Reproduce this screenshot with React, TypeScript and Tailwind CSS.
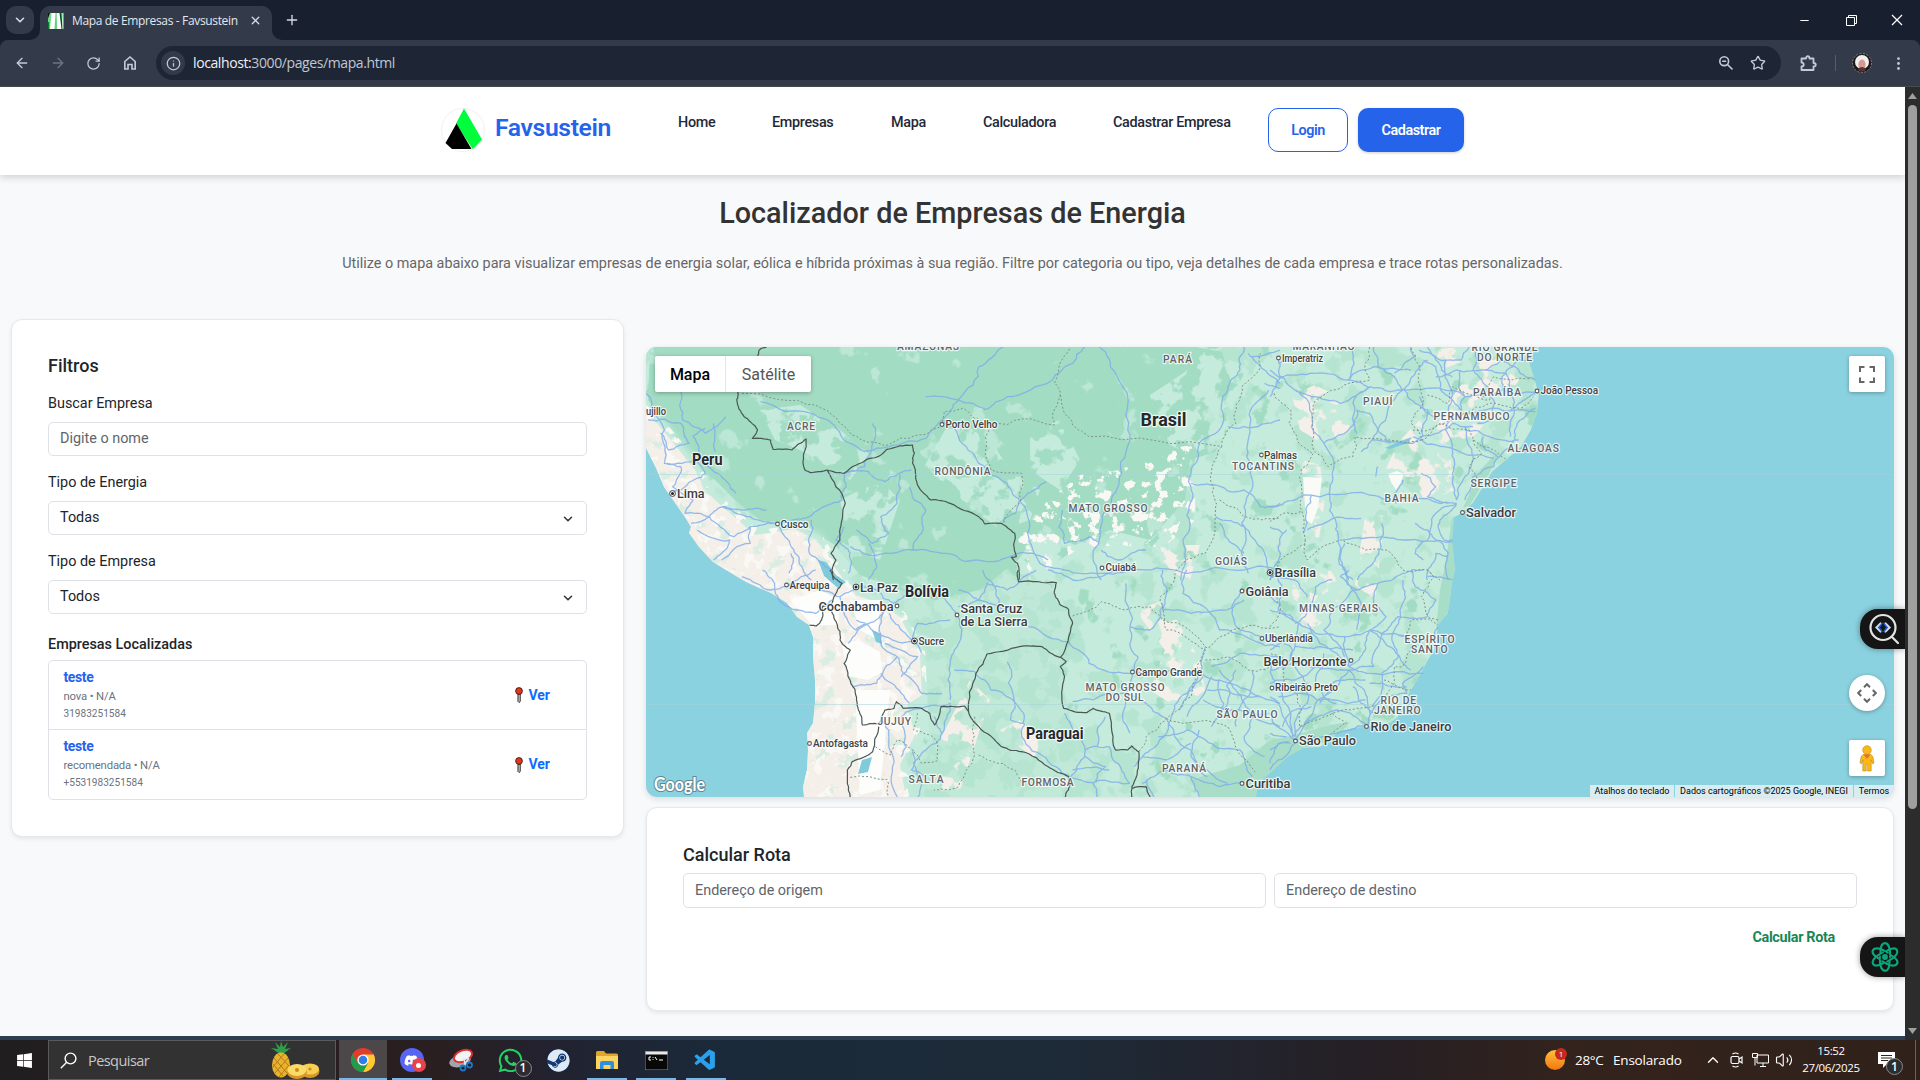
import React from "react";
import {
  ArrowLeft, ArrowRight, RotateCw, Info, Star, ChevronDown, ChevronUp, X, Plus,
  Minus, EllipsisVertical, Volume2,
} from "lucide-react";
import { FaWindows, FaDiscord, FaWhatsapp, FaSteam } from "react-icons/fa";
import { VscVscode } from "react-icons/vsc";

/* ---------- map data ---------- */

type Pt = [number, number];

function parse(s: string): Pt[] {
  return s.trim().split(/\s+/).map((p) => p.split(",").map(Number) as Pt);
}

/* Turns a coarse polyline into a slightly irregular one, always the same way for the same input. */
function wander(s: string, amp = 0.09): string {
  let pts = parse(s);
  let seed = Math.floor(pts[0][0] * 31 + pts[0][1] * 17 + pts.length * 7);
  const rnd = () => {
    seed = (seed * 1103515245 + 12345) % 2147483648;
    return seed / 2147483648 - 0.5;
  };
  for (let k = 0; k < 3; k++) {
    const out: Pt[] = [pts[0]];
    for (let i = 1; i < pts.length; i++) {
      const [ax, ay] = pts[i - 1];
      const [bx, by] = pts[i];
      const r = rnd() * 2 * amp;
      out.push([(ax + bx) / 2 - (by - ay) * r, (ay + by) / 2 + (bx - ax) * r], [bx, by]);
    }
    pts = out;
  }
  return "M" + pts.map((p) => p[0].toFixed(1) + " " + p[1].toFixed(1)).join("L");
}

const LAND =
  "M646 347V448L656 468 664 487 673 500 685 517 691 527 689 533 699 547 713 562 726 570 746 582 771 593 787 603 797 617 809 625 813 637 813 657 815 680 815 703 813 723 807 733 808 750 807 770 803 787 804 797H1256L1258 783 1270 773 1287 757 1303 748 1320 747 1332 740 1336 733 1353 728 1367 727 1390 723 1398 717 1405 700 1413 687 1421 673 1428 660 1436 647 1438 625 1448 613 1450 600 1452 583 1455 570 1452 540 1454 518 1463 512 1473 503 1483 487 1492 472 1506 460 1521 447 1531 430 1537 413 1539 395 1535 380 1530 365 1527 347Z";

const AMAZON =
  "M650 347H1196L1222 352 1232 385 1224 405 1228 430 1215 452 1190 460 1185 500 1150 540 1110 530 1075 545 1040 530 1018 560 980 590 935 600 900 590 860 575 835 545 800 525 760 520 735 500 715 480 690 465 668 432 648 400Z";

const AMAZON_LIGHT =
  "M945 430 965 425 990 440 1010 470 1040 490 1030 520 1000 530 975 510 950 490 925 465Z M1150 395 1185 372 1200 350 1225 347 1240 380 1225 440 1190 455 1160 440Z M760 410 800 405 840 430 870 455 850 480 800 450 775 440Z M840 500 880 480 900 500 880 560 850 550Z M1030 430 1060 420 1080 460 1060 490 1030 470Z";

const LOWLAND =
  "M890 575 960 560 1010 575 1050 585 1070 620 1062 680 1070 720 1110 760 1100 797H900L930 740 925 660 905 610Z";

const DRY =
  "M646 405 662 418 680 440 700 465 712 488 735 508 760 530 800 524 822 535 838 560 860 590 885 598 905 612 925 650 927 690 912 700 920 730 905 760 912 797H800L815 700 813 640 787 603 713 562 685 517 646 450Z";

const SALT =
  "M842 645 858 640 880 652 882 672 868 680 848 676Z M790 600 820 590 840 600 838 625 812 625Z M850 600 880 600 878 640 860 630Z M855 690 890 690 880 790 860 795Z";

const SERRADO =
  "M1048 500 1080 475 1120 470 1160 450 1192 445 1196 520 1160 550 1120 545 1080 548 1030 580 1018 540Z";

const NE_DRY =
  "M1385 470 1400 440 1425 415 1450 400 1480 360 1500 360 1520 380 1500 400 1480 430 1460 450 1455 490 1430 500 1400 490Z M1292 395 1315 385 1345 400 1350 430 1325 445 1300 430Z M1302 460 1320 465 1325 500 1318 545 1305 535Z M1430 350 1460 347 1480 355 1440 370Z M1365 515 1385 515 1375 600 1355 585Z";

const CENTER_DRY =
  "M1135 610 1165 600 1200 660 1205 690 1180 710 1150 690 1165 650Z M1160 545 1200 545 1190 580 1165 570Z M1020 720 1040 740 1035 760 1000 730Z M1290 580 1330 570 1350 600 1300 640Z M940 740 970 680 990 700 960 790 935 797Z";

const COAST_GREEN =
  "M1452 518 1458 515 1454 580 1448 612 1436 630 1440 590 1446 560Z M1256 797 1200 797 1190 780 1240 765 1270 740 1295 735 1330 725 1350 722 1335 740 1303 748 1270 773Z M1500 450 1490 472 1470 505 1463 508 1480 470Z";

const TRANSFORMS = [
  "translate(640 340) scale(.40816 .33333)",
  "translate(640 570) scale(.40816 .33333)",
  "translate(1270 340) scale(.41454 .33333)",
  "translate(1270 570) scale(.41454 .33333)",
];

const BORDERS: string[][] = [
  [
    "310,21 292,30 288,50 240,155 237,180 255,230 270,245 288,270 275,295 320,300 326,328 372,330 407,297 404,390 418,398 458,390 500,400 530,375 590,345 605,328 668,315 672,340 668,370 678,425 712,480 760,490 830,530 845,552 885,550 918,580 922,650 910,652 925,670 928,720",
    "458,390 503,490 492,560 490,600 468,640 480,660 470,690 474,720",
  ],
  [
    "465,0 478,25 495,40 478,75 470,100 447,110 445,150 432,168 415,165",
    "463,115 482,160 490,210 515,240 500,280 510,320 527,360 535,420 545,465 585,462 600,420 622,415 628,395 645,415 690,415 710,430 722,465 738,410 795,408 805,425 823,310 850,252 930,230 985,230 1030,262 1060,160 1050,118 1030,105 1015,70 1020,38 928,36 926,0",
    "1030,262 1044,275 1030,290 1040,320 1038,415 1095,428 1110,415 1150,430 1165,540 1195,540 1205,528 1222,545 1218,610 1205,650 1205,681",
    "585,470 570,545 520,575 508,600 515,681",
    "805,425 830,470 885,530 935,545 1000,590 1050,620 1052,650 1042,681",
    "1205,655 1240,650 1250,681",
  ],
  [],
  [],
];

const STATES: string[][] = [
  [
    "250,160 430,195 520,285 600,318 680,285 735,260 745,215 790,205 820,235 860,255 1015,255 1030,160 1015,130 1055,21",
    "1030,165 1060,255 1100,290 1425,320 1460,250 1475,140 1510,100 1520,40",
    "860,260 860,390 935,400 930,490 890,550",
    "1425,320 1405,440 1410,510 1385,640 1345,655 1310,720",
    "1420,480 1480,530 1568,535",
  ],
  [
    "1060,138 1130,95 1190,120 1250,110 1280,150 1390,235 1450,180 1568,170",
    "1310,20 1275,80 1290,180 1385,240 1360,330 1320,420 1290,445 1240,500 1222,545",
    "1290,445 1400,455 1440,470 1475,560 1510,610",
    "820,440 820,555 780,650 720,660",
    "830,555 890,580 940,640",
    "515,622 605,628 608,681",
    "680,430 670,480 725,510 730,570 690,580 630,510 615,555 575,525",
    "1385,270 1440,260 1490,300 1568,280",
  ],
  [
    "10,160 50,210 45,250 70,310 105,340 75,390 78,470 85,600",
    "240,21 240,120 190,130 110,180 105,330 140,380 200,350 205,290 290,300 365,300 340,250 370,190 350,60 340,21",
    "345,270 420,250 470,220 530,190 600,205 635,170",
    "365,300 410,250 480,270 490,300 550,340 570,360",
    "490,300 510,340 480,380 500,420",
    "380,165 430,190 440,140 530,180 540,110 630,115",
    "0,545 30,520 75,515",
    "85,600 90,660 150,610 170,600 230,630 280,630 320,690 380,690 410,720",
    "85,610 50,640 0,720",
  ],
  [
    "380,0 395,20 365,80 375,130 405,165",
    "405,150 340,150 330,190 340,240 320,290 300,290 300,340 275,400",
    "275,330 340,360",
    "270,400 150,430 70,470 65,370 30,350 35,270 0,250",
    "150,430 185,460 150,490",
    "0,170 25,120 20,60",
  ],
];

const ROADS: string[][] = [
  [
    "890,21 830,80 780,180 700,170",
    "780,180 845,208 900,170 1010,120 1060,70 1090,21",
    "780,180 740,240 700,295 610,320 550,335 480,265 420,220 295,185",
    "1125,21 1165,100 1195,270 1180,400 1155,490 1125,600 1110,650 1130,720",
    "740,245 780,290 830,370 900,430 935,490 950,580 980,670 1040,690 1130,700 1240,690 1340,700 1480,690 1568,690",
    "570,250 570,310 550,380 500,400 495,480 450,500 390,540",
    "500,400 560,395 600,425 635,400 665,390",
    "635,400 630,490 590,530 610,580 570,610 530,570",
    "660,440 700,510 690,580 670,630 560,645 515,620",
    "560,610 580,680 560,720",
    "670,630 750,640 850,665 950,640 1000,660",
    "995,425 950,460 920,520 890,545",
    "1035,510 1040,610 1100,590 1125,608",
    "1480,21 1470,90 1440,150 1430,240 1370,310 1350,400 1345,500 1330,600 1325,720",
    "1490,40 1530,90 1568,130",
    "1500,50 1568,30",
    "1540,150 1500,200 1490,300 1495,400 1480,500 1485,600 1490,700",
    "1350,430 1400,435 1480,450 1520,500 1568,490",
    "1440,260 1480,260 1568,240",
    "1530,130 1568,145",
    "1410,530 1480,560 1520,620 1540,690",
    "1420,550 1450,610 1480,640",
    "100,150 105,240 160,280 210,230",
    "160,265 130,290 150,350 190,400 235,460",
    "180,250 185,335",
    "20,240 100,250 120,310 70,330 50,280",
    "15,160 60,270 60,370 100,380 80,440 130,480 110,520 170,530 210,500 270,530 340,550 390,535",
    "65,370 140,365 160,400 110,440 80,455",
    "125,550 170,530 230,590 270,560 330,550",
    "140,570 220,600 200,640 180,660",
    "270,560 270,610 200,660",
    "340,560 370,620 400,690 420,720",
    "420,540 415,640 470,690",
    "200,500 250,510 310,510",
    "370,640 365,700",
    "1130,630 1170,660 1240,630",
    "500,560 480,600 515,640 510,700",
  ],
  [
    "250,20 320,60 380,50 440,60 490,80 530,50 580,60 620,100 680,70 740,80 780,140 770,240 760,310 760,390",
    "300,0 330,40 350,100 380,120 430,130 470,90",
    "360,50 395,20 430,0",
    "490,80 500,130 530,180 560,160 600,120 590,220 630,260 590,320 580,340 520,350",
    "510,220 560,160",
    "530,150 600,200 670,215 690,250",
    "590,310 640,370 660,400",
    "630,260 640,300 690,370 740,370",
    "600,220 680,260 640,320",
    "680,215 640,180 610,130",
    "670,210 680,160 760,150",
    "780,110 830,90 850,40 900,60 940,20 970,0",
    "780,60 830,90 900,120",
    "840,0 870,50 880,100",
    "770,300 820,305 860,360 940,430 935,500 1000,575 1080,630 1200,640",
    "900,275 910,300 908,450 940,460",
    "950,170 1050,215 1100,280 1200,310 1300,300 1370,310 1420,330 1500,370 1568,400",
    "1000,0 1060,30 1130,20 1190,0",
    "1190,40 1200,180 1220,260 1205,310 1190,390 1200,490",
    "1200,170 1250,180 1280,100",
    "1060,395 1110,390 1180,370 1240,400 1280,440",
    "1280,0 1290,70 1280,120 1350,130 1420,120 1480,90",
    "1340,0 1330,70 1420,180 1500,210 1568,230",
    "1480,60 1450,110 1470,180 1520,200",
    "1385,230 1370,310 1340,370 1300,450 1250,540 1210,590",
    "1380,320 1320,420",
    "1400,320 1340,440",
    "1420,300 1460,360 1500,440 1568,470",
    "1390,360 1450,370 1520,380",
    "1380,390 1470,420 1540,430",
    "1460,300 1440,400 1400,470",
    "1500,300 1490,380 1460,470",
    "1270,500 1340,480 1410,530 1470,540 1500,620",
    "1230,640 1290,600 1350,620 1420,650 1480,640",
    "1280,440 1310,500 1370,590 1440,640",
    "1370,480 1350,560 1390,620",
    "1230,560 1290,570 1350,520",
    "1040,430 1060,480 1090,550 1070,600 1050,640",
    "1090,540 1150,530 1180,600 1200,640",
    "1090,560 1140,590 1110,640 1120,681",
    "1060,600 1150,600",
    "1140,440 1120,480 1120,530",
    "590,440 610,480 620,560 630,681",
    "640,440 650,500 640,560",
    "720,440 740,490 700,540 670,580 690,640 680,681",
    "640,440 700,410 760,400 740,490",
    "670,540 665,600 700,620",
    "1568,100 1530,60 1480,60",
    "1240,630 1260,681",
    "1350,620 1370,681",
    "1420,330 1430,400 1410,450",
    "1400,290 1470,250 1568,260",
    "1500,440 1480,500 1530,560",
  ],
  [
    "20,60 25,110 0,170",
    "80,50 20,70",
    "0,90 60,150 100,170 170,190 240,140 320,150 410,145 470,170 560,150 640,158",
    "20,110 110,100 190,120 250,80 340,90",
    "60,150 90,180 100,260 130,310 150,400 145,470 160,550 170,620 190,720",
    "130,310 180,280 210,210 240,220 260,270 290,310",
    "200,21 190,120 240,145",
    "250,21 260,80 300,110 320,150",
    "320,150 260,270 220,335",
    "320,150 350,100 380,60",
    "325,150 350,190 380,210 400,240",
    "345,290 420,320 540,355",
    "245,300 345,310 365,290 440,250 490,260",
    "360,30 410,60 460,60 480,21",
    "400,110 450,90 520,90 560,60 630,60",
    "410,145 400,80 370,60",
    "425,60 440,160 430,210 440,330 440,400 450,480",
    "460,90 470,170 460,220 520,210 640,215",
    "490,21 490,90 530,150 540,230 500,250",
    "520,90 570,100 580,150 590,210 580,290",
    "600,40 560,110 560,150",
    "640,160 600,190 580,210",
    "640,205 590,270 590,300",
    "470,270 530,290 560,300 600,300",
    "470,260 490,350 470,410 450,480",
    "515,290 520,330 550,350",
    "590,300 540,380 490,410 470,480",
    "365,400 400,440 380,470 430,490",
    "80,465 240,465 280,480 410,490 450,490",
    "0,500 60,480 80,465",
    "100,465 90,550 80,580",
    "220,535 130,550 90,570",
    "450,490 400,520 380,600 350,640 370,660",
    "450,490 410,540 420,600 440,600",
    "175,600 270,590 320,600 440,605",
    "350,550 380,570 400,600",
    "270,550 265,600 240,680 210,720",
    "400,600 430,640 430,720",
    "430,650 400,640 380,690 380,720",
    "260,380 255,410",
    "320,420 300,460 305,490",
    "40,570 20,620 10,700 0,720",
    "0,560 30,580",
    "180,610 175,680 200,720",
    "360,170 380,220 370,290",
    "410,145 440,180 460,210",
    "300,100 350,50 340,21",
    "240,140 200,190 210,280",
    "560,60 600,90 640,120",
    "380,21 400,60 440,110",
  ],
  [
    "0,20 60,30 90,80",
    "10,10 30,60 20,120 70,160 110,190 190,200 300,190 330,200",
    "180,10 200,60 150,120 130,180 180,260",
    "210,60 170,20 190,0",
    "200,60 260,40 320,10 370,0",
    "260,40 250,100 280,140 240,180 230,240 190,290",
    "320,30 320,100 300,180 310,260 270,310 245,410",
    "380,20 440,30",
    "340,0 350,50 400,90 380,140",
    "380,140 310,140 270,190 250,290 180,300",
    "405,170 390,220 400,250",
    "190,290 120,220 90,160",
    "190,290 240,310 370,310",
    "370,290 320,340 330,370 280,380 240,440",
    "190,300 160,350 110,400 60,510",
    "190,300 230,370 240,420 235,470",
    "180,300 110,290 60,330 0,340",
    "130,250 110,330 130,380 160,400",
    "0,200 50,230 80,320 90,400 60,500",
    "60,510 0,430",
    "60,500 20,400 0,380",
    "55,500 10,330 0,280",
    "60,500 100,450 160,420 235,470",
    "60,515 150,490 235,465",
    "0,240 60,200 100,190",
    "60,230 120,230 200,240",
    "180,200 190,290",
    "20,380 80,370 150,390 230,390",
    "40,500 0,490",
    "45,515 0,540",
    "60,520 20,570 0,600",
    "50,520 20,520 0,580",
    "240,340 300,350 330,350",
    "250,430 220,400 200,350",
    "0,120 40,140 70,160",
    "100,410 60,420 30,470",
    "210,180 220,100 200,60",
    "300,190 340,210 380,210 390,230",
    "60,160 100,110 110,50 150,30",
    "70,160 60,230 30,300",
    "240,180 300,240 340,300",
    "120,400 150,340 230,330",
    "0,300 60,280 110,290",
  ],
];

/* label: text, left, baseline, width, kind (c city, b large city, s state, n country) */
type Label = [string, number, number, number, "c" | "b" | "s" | "n"];
const LABELS: Label[] = [
  ["AMAZONAS", 897, 350, 62, "s"], ["PARÁ", 1163, 363, 29, "s"], ["ujillo", 646, 414.5, 20, "c"], ["ACRE", 787, 430, 28, "s"],
  ["Porto Velho", 945.5, 428, 52, "c"], ["Brasil", 1140.5, 425.5, 46, "n"], ["Peru", 692, 465, 30.5, "n"], ["RONDÔNIA", 934.5, 474.5, 56, "s"],
  ["MATO GROSSO", 1068.5, 512, 79, "s"], ["Lima", 677, 497.5, 27.5, "b"], ["Cusco", 780.5, 528, 28, "c"], ["Cuiabá", 1105.5, 571, 30.5, "c"],
  ["GOIÁS", 1215, 564.5, 32, "s"], ["Palmas", 1264, 458.5, 33, "c"], ["TOCANTINS", 1232, 470, 62, "s"], ["Arequipa", 789.5, 588.5, 40, "c"],
  ["La Paz", 860, 591.5, 38, "b"], ["Bolívia", 905, 597, 44, "n"], ["Cochabamba", 818.5, 610.5, 75, "b"], ["Santa Cruz", 960.5, 613, 62, "b"],
  ["de La Sierra", 960.5, 626, 67, "b"], ["Sucre", 918.5, 645, 25.5, "c"], ["JUJUY", 877.5, 724.5, 33.5, "s"], ["Antofagasta", 813, 746.5, 55, "c"],
  ["SALTA", 908.5, 782.5, 35, "s"], ["FORMOSA", 1021.5, 786, 52, "s"], ["Paraguai", 1026, 738.5, 57.5, "n"], ["Campo Grande", 1135.5, 676, 66.5, "c"],
  ["MATO GROSSO", 1085.5, 691, 79, "s"], ["DO SUL", 1105.5, 701, 38, "s"], ["SÃO PAULO", 1216.5, 718, 61, "s"], ["PARANÁ", 1162, 771.5, 44, "s"],
  ["Curitiba", 1245.5, 788, 45, "b"], ["Goiânia", 1245.5, 595.5, 43, "b"], ["Brasília", 1274.5, 576.5, 41.5, "b"], ["Uberlândia", 1265, 642, 48, "c"],
  ["Belo Horizonte", 1263.5, 665.5, 83, "b"], ["Ribeirão Preto", 1275, 691, 63, "c"], ["MINAS GERAIS", 1299, 612, 79, "s"], ["ESPÍRITO", 1404.5, 642.5, 50, "s"],
  ["SANTO", 1411, 653, 36.5, "s"], ["RIO DE", 1380.5, 704, 35.5, "s"], ["JANEIRO", 1374, 714, 46.5, "s"], ["Rio de Janeiro", 1370.5, 731, 81, "b"],
  ["São Paulo", 1299, 745, 57, "b"], ["MARANHÃO", 1292.5, 350, 62, "s"], ["Imperatriz", 1282, 361.5, 41, "c"], ["RIO GRANDE", 1471.5, 350.5, 66, "s"],
  ["DO NORTE", 1477, 360.5, 55, "s"], ["PARAÍBA", 1473, 395.5, 48, "s"], ["João Pessoa", 1540.5, 394, 57.5, "c"], ["PIAUÍ", 1363, 404.5, 29.5, "s"],
  ["PERNAMBUCO", 1433.5, 419.5, 76, "s"], ["ALAGOAS", 1507.5, 451.5, 51.5, "s"], ["SERGIPE", 1470.5, 487, 46, "s"], ["BAHIA", 1384.5, 501.5, 34, "s"],
  ["Salvador", 1466, 517, 50, "b"],
];

const DOTS: Pt[] = [
  [942, 424.5], [777.5, 524], [1102, 568], [1261.5, 455], [786.5, 585], [897, 606], [957, 615], [809.5, 743.5], [1132.5, 672], [1242, 783.5],
  [1242, 591], [1262, 638.5], [1351, 660.5], [1272, 688], [1366.5, 726.5], [1295.5, 741], [1278.5, 358], [1537, 391], [1462.5, 512.5],
];
const CAPITALS: Pt[] = [[672.5, 493.5], [856, 587], [914.5, 641], [1270, 572.5]];

const labelStyle: Record<string, [number, number, string]> = {
  c: [10.8, 500, "#3f4144"],
  b: [13.4, 500, "#3a3c40"],
  s: [10.3, 500, "#5f6368"],
  n: [15.6, 700, "#26282c"],
};

function Lines({ set, amp, ...svg }: { set: string[][]; amp: number } & React.SVGProps<SVGPathElement>) {
  return (
    <>
      {set.map((list, i) => (
        <g key={i} transform={TRANSFORMS[i]} fill="none">
          <path d={list.map((s) => wander(s, amp)).join("")} vectorEffect="non-scaling-stroke" strokeLinejoin="round" {...svg} />
        </g>
      ))}
    </>
  );
}

/* Breaks a flat region into irregular patches of a single colour. */
function Patches({ id, freq, seed, cut, color }: { id: string; freq: string; seed: number; cut: number; color: string }) {
  return (
    <filter id={id} x="0" y="0" width="1" height="1" colorInterpolationFilters="sRGB">
      <feTurbulence type="fractalNoise" baseFrequency={freq} numOctaves={4} seed={seed} />
      <feColorMatrix type="matrix" values={`0 0 0 0 0  0 0 0 0 0  0 0 0 0 0  14 0 0 0 ${-14 * cut}`} result="m" />
      <feFlood floodColor={color} />
      <feComposite in2="m" operator="in" />
      <feComposite in2="SourceAlpha" operator="in" />
    </filter>
  );
}

function MapCanvas() {
  return (
    <svg viewBox="646 347 1248 450" width="1248" height="450" className="block">
      <defs>
        <clipPath id="land"><path d={LAND} /></clipPath>
        <Patches id="f-mid" freq="0.035" seed={4} cut={0.56} color="#b5e4d0" />
        <Patches id="f-dark" freq="0.04" seed={9} cut={0.66} color="#a2dcc3" />
        <Patches id="f-pale" freq="0.035" seed={3} cut={0.67} color="#bce7d6" />
        <Patches id="f-tan" freq="0.05" seed={7} cut={0.52} color="#f4efe8" />
        <Patches id="f-white" freq="0.09" seed={12} cut={0.57} color="#faf8f5" />
        <Patches id="f-lite" freq="0.05" seed={21} cut={0.45} color="#c5ebdc" />
        <Patches id="f-green" freq="0.06" seed={5} cut={0.62} color="#c5ebdc" />
        <filter id="soft"><feGaussianBlur stdDeviation="3" /></filter>
      </defs>
      <rect x="646" y="347" width="1248" height="450" fill="#8bd2e0" />
      <g clipPath="url(#land)">
        <path d={LAND} fill="#c5ebdc" />
        <path d={LAND} filter="url(#f-mid)" />
        <path d={LAND} filter="url(#f-dark)" />
        <path d={LOWLAND} fill="#b5e4d0" />
        <path d={LOWLAND} filter="url(#f-lite)" opacity=".7" />
        <path d={AMAZON} fill="#a2dcc3" />
        <path d={AMAZON} filter="url(#f-pale)" />
        <path d={AMAZON_LIGHT} filter="url(#f-lite)" />
        <path d={COAST_GREEN} fill="#a8dec7" />
        <path d={DRY} fill="#c5ebdc" filter="url(#soft)" />
        <path d={DRY} fill="#f4efe8" transform="translate(-5 5)" />
        <path d={DRY} filter="url(#f-green)" opacity=".55" />
        <path d={DRY} filter="url(#f-white)" />
        <path d={SALT} fill="#fdfdfc" />
        <path d={SERRADO} filter="url(#f-white)" />
        <path d={NE_DRY} filter="url(#f-tan)" />
        <path d={CENTER_DRY} filter="url(#f-tan)" />
        <path d="M1388 474 1397 471 1404 474 1400 484 1396 490 1391 482Z M1303 477 1322 478 1318 508 1312 524 1306 520Z" fill="#fafaf7" />
        <path d="M1385 448 1398 442 1412 437 1408 443 1390 449Z M818 560 826 562 836 575 846 582 838 588 824 576Z M872 630 880 634 882 644 876 642Z M862 760 872 757 868 772 858 774Z" fill="#7fcbdc" />
      </g>
      <Lines set={ROADS} amp={0.13} stroke="#7facea" strokeWidth={1.3} opacity={0.8} />
      <Lines set={STATES} amp={0.12} stroke="#7f9389" strokeWidth={1} strokeDasharray="2 2" />
      <Lines set={BORDERS} amp={0.08} stroke="#4b5754" strokeWidth={1.2} />
      <path d="M646 474.5H1894M646 704.5H1894" stroke="#a5d3da" strokeWidth="1" opacity=".5" />
      {DOTS.map(([x, y]) => (
        <circle key={x + "-" + y} cx={x} cy={y} r="1.9" fill="#fff" stroke="#55585c" strokeWidth="1.1" />
      ))}
      {CAPITALS.map(([x, y]) => (
        <g key={x}>
          <circle cx={x} cy={y} r="2.9" fill="#fff" stroke="#3c4043" strokeWidth="1" />
          <circle cx={x} cy={y} r="1.5" fill="#202124" />
        </g>
      ))}
      {LABELS.map(([t, x, y, w, k]) => (
        <text
          key={t + x} x={x} y={y} textLength={w} lengthAdjust={k === "s" ? "spacing" : "spacingAndGlyphs"}
          fontSize={t === "Brasil" ? 18 : labelStyle[k][0]} fontWeight={labelStyle[k][1]} fill={labelStyle[k][2]}
          stroke="#ffffff" strokeOpacity=".75" strokeWidth="2.4" strokeLinejoin="round" paintOrder="stroke"
        >
          {t}
        </text>
      ))}
      <text x="654" y="790.5" textLength="51" lengthAdjust="spacingAndGlyphs" fontSize="18" fontWeight="700" fill="#fff" stroke="#5f8a96" strokeWidth="2.2" paintOrder="stroke" fontFamily="Lato, sans-serif">Google</text>
    </svg>
  );
}

function MapPanel() {
  return (
    <div className="relative h-[450px] w-[1248px] overflow-hidden rounded-[11px] shadow-[0_2px_6px_rgba(0,0,0,0.12)]">
      <MapCanvas />
      <div className="absolute left-[9px] top-[9px] flex h-9 rounded-[2px] bg-white pt-0.5 text-[16px] shadow-[0_1px_4px_rgba(0,0,0,0.3)]">
        <div className="-mt-0.5 flex w-[71px] items-center justify-center border-r border-[#e6e6e6] pt-0.5 font-medium text-black">Mapa</div>
        <div className="flex w-[85px] items-center justify-center text-[#565656]">Satélite</div>
      </div>
      <div className="absolute left-[1203px] top-[9px] flex size-9 items-center justify-center rounded-[2px] bg-white shadow-[0_1px_4px_rgba(0,0,0,0.3)]">
        <svg width="16" height="17" viewBox="0 0 16 17" fill="none" stroke="#666" strokeWidth="2"><path d="M1 6V1h4.500M10.500 1H15v5M15 11.500V16h-4.500M5.500 16H1v-4.500" /></svg>
      </div>
      <div className="absolute left-[1203px] top-[328px] flex size-9 items-center justify-center rounded-full bg-white shadow-[0_1px_4px_rgba(0,0,0,0.3)]">
        <svg width="20" height="20" viewBox="0 0 20 20" fill="none" stroke="#666" strokeWidth="2"><path d="M7 4.200 10 1.200l3 3M7 15.800l3 3 3-3M4.200 7l-3 3 3 3M15.800 7l3 3-3 3" /></svg>
      </div>
      <div className="absolute left-[1203px] top-[393px] flex size-9 items-center justify-center rounded-[2px] bg-white shadow-[0_1px_4px_rgba(0,0,0,0.3)]">
        <svg width="16" height="27" viewBox="0 0 16 27" stroke="#b98a2e" strokeWidth=".6">
          <path d="M4 9.500h8l2 2.500 1 6-1.500.8-1.300-4V26H8.700v-7H7.300v7H3.800V14.800l-1.300 4L1 18l1-6z" fill="#fbb916" />
          <circle cx="8" cy="5" r="4.300" fill="#fbb916" />
          <path d="M4.500 9.500h7L8 14z" fill="#e8702a" stroke="none" />
        </svg>
      </div>
      <div className="absolute bottom-0 right-0 flex h-3 gap-px text-[9px] leading-[12px] text-black">
        <span className="w-[84px] bg-[#d9edf1] text-center">Atalhos do teclado</span>
        <span className="w-[178px] bg-[#d9edf1] text-center">Dados cartográficos ©2025 Google, INEGI</span>
        <span className="w-[40px] bg-[#d9edf1] text-center">Termos</span>
      </div>
    </div>
  );
}

/* ---------- browser chrome ---------- */

function TabStrip() {
  return (
    <div className="flex h-10 bg-[#182030] pl-1.5 text-[#d5dae4]">
      <div className="mt-1.5 flex size-7 items-center justify-center rounded-[10px] bg-[#333b4b]"><ChevronDown size={14} strokeWidth={2.800} /></div>
      <div className="relative ml-1.5 mt-1.5 flex h-[34px] w-[232px] items-center rounded-t-[10px] bg-[#333b4b] pb-[5px] pl-2">
        <svg className="absolute -left-[10px] bottom-0" width="10" height="10"><path d="M10 0v10H0A10 10 0 0 0 10 0" fill="#333b4b" /></svg>
        <svg className="absolute -right-[10px] bottom-0" width="10" height="10"><path d="M0 0v10h10A10 10 0 0 1 0 0" fill="#333b4b" /></svg>
        <svg width="16" height="16" viewBox="0 0 16 16">
          <rect width="16" height="16" fill="#fff" />
          <path d="M2 0H3.500L2 16H0V6z" fill="#5fdf80" /><path d="M0 0H2L0 6z" fill="#111" /><path d="M0 9h1.200v7H0z" fill="#0a7a2a" />
          <path d="M7.500 0h1.200L9 16H6.500z" fill="#5fd07c" /><path d="M11.500 0h2l1 16h-1z" fill="#0b4a20" /><path d="M14.500 0H16v16h-1z" fill="#05e63c" />
        </svg>
        <span className="ml-[8px] w-[166px] whitespace-nowrap font-['Open_Sans','Noto_Sans',sans-serif] text-[12px] tracking-[-0.35px] text-[#e3e7ee]">Mapa de Empresas - Favsustein</span>
        <X className="ml-[11px]" size={13} strokeWidth={2.400} />
      </div>
      <Plus className="ml-[12px] mt-3" size={16} strokeWidth={2} />
      <div className="ml-auto flex h-10 items-center text-white">
        <Minus className="mr-[35px]" size={13} strokeWidth={1.800} />
        <svg className="mr-[34px]" width="11" height="11" viewBox="0 0 11 11" fill="none" stroke="currentColor"><path d="M.5 2.500h8v8h-8zM2.500 2.500v-2h8v8h-2" /></svg>
        <svg className="mr-[17px]" width="12" height="12" viewBox="0 0 12 12" fill="none" stroke="currentColor" strokeWidth="1.200"><path d="m1 1 10 10M11 1 1 11" /></svg>
      </div>
    </div>
  );
}

function Toolbar() {
  return (
    <div className="flex h-[47px] items-center rounded-tl-[8px] rounded-tr-[8px] border-b border-[#474a50] bg-[#333b4b] pl-[14px] text-[#c3cbdb]">
      <ArrowLeft size={16} />
      <ArrowRight className="ml-5 text-[#6d7482]" size={16} />
      <RotateCw className="ml-[20px]" size={15} />
      <svg className="ml-[21px]" width="16" height="16" viewBox="0 0 16 16" fill="none" stroke="currentColor" strokeWidth="1.600"><path d="M2.800 6.500 8 2l5.200 4.500V14H10V9.500H6V14H2.800z" /></svg>
      <div className="ml-[18px] flex h-[34px] w-[1625px] items-center rounded-full bg-[#1e2636] pl-[5px]">
        <div className="flex size-6 items-center justify-center rounded-full bg-[#333b4b]"><Info size={15} /></div>
        <span className="ml-2 whitespace-nowrap pb-px font-['Open_Sans','Noto_Sans',sans-serif] text-[14px] tracking-[-0.4px] text-[#c0c6d2]"><span className="text-[#eef0f5]">localhost:</span>3000/pages/mapa.html</span>
        <svg className="ml-auto" width="16" height="16" viewBox="0 0 16 16" fill="none" stroke="currentColor" strokeWidth="1.600"><circle cx="6.200" cy="6.200" r="4.400" /><path d="m9.500 9.500 5 5M4.200 6.200h4" /></svg>
        <Star className="ml-[16px] mr-[15px]" size={16} />
      </div>
      <svg className="ml-[18px]" width="18" height="18" viewBox="0 0 18 18" fill="none" stroke="currentColor" strokeWidth="1.800" strokeLinejoin="round"><path d="M2.500 4.500H7c0-3 3.500-3 3.500 0h4V9c3 0 3 3.500 0 3.500V16h-12v-3.500c3 0 3-4 0-4z" /></svg>
      <div className="ml-[18px] h-4 w-px bg-[#555e70]" />
      <svg className="ml-[16px]" width="20" height="20" viewBox="0 0 20 20">
        <circle cx="10" cy="10" r="9.500" fill="#1b1b1d" stroke="#8d8378" strokeDasharray="2 1.500" />
        <ellipse cx="10" cy="9" rx="7" ry="7" fill="#f3eef0" /><ellipse cx="10" cy="11.500" rx="3.600" ry="5" fill="#d39b92" /><path d="M6 15.500q4-3 8 0l-1 2.500q-3 1-6 0z" fill="#5a3434" />
      </svg>
      <EllipsisVertical className="ml-[18px]" size={17} />
    </div>
  );
}

/* ---------- page ---------- */

function SiteHeader() {
  return (
    <header className="relative flex h-[88px] bg-white pl-[441px] pt-[21px] shadow-[0_2px_8px_rgba(0,0,0,0.18)]">
      <svg width="44" height="44" viewBox="0 0 44 44">
        <circle cx="22" cy="22" r="21.500" fill="#fff" stroke="#f1f1f1" />
        <path d="M23 .5 15 15.500 31.500 41 35 38 41 31.500z" fill="#02fd3d" />
        <path d="M15.500 15.500 30.500 41H11L4.500 35z" fill="#000" />
      </svg>
      <span className="ml-[10px] mt-[4px] w-[117px] text-[24.700px] font-semibold leading-[32px] tracking-[-0.350px] text-[#2563eb]">Favsustein</span>
      <nav className="ml-[66px] mt-[6px] flex gap-[57px] whitespace-nowrap text-[14.400px] font-medium leading-[18px] tracking-[-0.320px] text-[#1f2937]">
        <span className="w-[37px]">Home</span><span className="w-[62px]">Empresas</span><span className="w-[35px]">Mapa</span><span className="w-[73px]">Calculadora</span><span className="w-[118px]">Cadastrar Empresa</span>
      </nav>
      <div className="ml-[37px] flex gap-[10px] text-[14.400px] font-semibold tracking-[-0.450px]">
        <button className="h-11 w-20 rounded-[10px] border border-[#2563eb] pt-0.5 text-[#2563eb]">Login</button>
        <button className="h-11 w-[106px] rounded-[10px] bg-[#2563eb] pt-0.5 text-white shadow-[0_1px_3px_rgba(0,0,0,0.2)]">Cadastrar</button>
      </div>
    </header>
  );
}

function Field({ label, children, select }: { label: string; children: React.ReactNode; select?: boolean }) {
  return (
    <div className="mb-[14px]">
      <div className="mb-[7px] h-[23px] pt-px leading-[22px]">{label}</div>
      <div className={select ? "mb-[15px] flex h-[34px] items-center justify-between rounded-[5px] border border-[#dee2e6] bg-white pl-[11px] pr-[11px]" : "mb-[15px] flex h-[34px] items-center rounded-[5px] border border-[#dee2e6] bg-white pb-px pl-[11px] text-[#60656b]"}>
        {children}
        {select && <ChevronDown className="mt-0.5" size={14} strokeWidth={2.800} color="#343a40" />}
      </div>
    </div>
  );
}

function Company({ kind, phone }: { kind: string; phone: string }) {
  return (
    <div className="flex h-[69px] pl-[14.500px] pr-[36px]">
      <div className="pt-[6px] text-[#6b7280]">
        <div className="text-[14px] font-bold leading-[21px] tracking-[-0.400px] text-[#2563eb]">teste</div>
        <div className="text-[11.300px] leading-[18px] tracking-[-0.150px]">{kind} • N/A</div>
        <div className="text-[10.080px] leading-[15px]">{phone}</div>
      </div>
      <div className="ml-auto flex items-center gap-[5px] text-[14px] font-bold text-[#0d6efd]">
        <svg width="8" height="16" viewBox="0 0 8 16"><path d="M3 7h2.200v7.500L4 15.500 3 14.500z" fill="#ddd" stroke="#222" /><circle cx="4" cy="4" r="3.400" fill="#e3351b" stroke="#2a1512" strokeWidth=".8" /></svg>
        Ver
      </div>
    </div>
  );
}

function Sidebar() {
  return (
    <section className="h-[518px] w-[613px] rounded-[11px] border border-[#e6e8eb] bg-white px-9 pt-[35px] text-[14.400px] text-[#212529] shadow-[0_2px_4px_rgba(0,0,0,0.08)]">
      <h5 className="mb-[15px] h-[22px] text-[18px] font-medium leading-[22px]">Filtros</h5>
      <Field label="Buscar Empresa">Digite o nome</Field>
      <Field label="Tipo de Energia" select>Todas</Field>
      <Field label="Tipo de Empresa" select>Todos</Field>
      <h6 className="mb-[6px] mt-[22px] h-[18px] font-medium leading-[18px]">Empresas Localizadas</h6>
      <div className="h-[140px] divide-y divide-[#dee2e6] rounded-[5px] border border-[#dee2e6]">
        <Company kind="nova" phone="31983251584" />
        <Company kind="recomendada" phone="+5531983251584" />
      </div>
    </section>
  );
}

function RouteCard() {
  return (
    <section className="mt-[10px] h-[204px] rounded-[11px] border border-[#e6e8eb] bg-white px-9 pt-[36px] text-[14.400px] text-[#60656b] shadow-[0_2px_4px_rgba(0,0,0,0.08)]">
      <h5 className="mb-[7px] h-[22px] text-[18px] font-medium leading-[22px] text-[#212529]">Calcular Rota</h5>
      <div className="flex gap-2">
        <div className="flex h-[35px] flex-1 items-center rounded-[5px] border border-[#dee2e6] pl-[11px]">Endereço de origem</div>
        <div className="flex h-[35px] flex-1 items-center rounded-[5px] border border-[#dee2e6] pl-[11px]">Endereço de destino</div>
      </div>
      <div className="mt-[20px] pr-[22px] text-right text-[14.400px] font-bold leading-[20px] tracking-[-0.320px] text-[#198754]">Calcular Rota</div>
    </section>
  );
}

function Page() {
  return (
    <div className="relative h-[953px] w-[1905px] overflow-hidden bg-[#f8f9fb]">
      <SiteHeader />
      <h1 className="mt-[21px] text-center text-[28.800px] font-medium leading-[35px] text-[#333]">Localizador de Empresas de Energia</h1>
      <p className="mt-[22px] text-center text-[14.400px] leading-[22px] text-[#666]">
        Utilize o mapa abaixo para visualizar empresas de energia solar, eólica e híbrida próximas à sua região. Filtre por categoria ou tipo, veja detalhes de cada empresa e trace rotas personalizadas.
      </p>
      <main className="mt-[44px] flex gap-[22px] pl-[11px]">
        <Sidebar />
        <div className="w-[1248px] pt-[28px]">
          <MapPanel />
          <RouteCard />
        </div>
      </main>
      <div className="absolute bottom-0 left-0 h-1 w-full bg-[#2c3e50]" />
      <div className="absolute right-0 top-[522px] flex h-10 w-[45px] items-center rounded-l-[18px] bg-[#151515] pl-[8px] shadow-[0_0_6px_rgba(0,0,0,0.4)]">
        <svg width="32" height="32" viewBox="0 0 32 32" fill="none" stroke="#e4e4e4" strokeWidth="2.200" strokeLinecap="round">
          <circle cx="15" cy="14.500" r="12.500" /><path d="m24 24 6 6" /><path d="m12.500 10.500-4 4 4 4" stroke="#c8d8f5" /><path d="m17.500 10.500 4 4-4 4" stroke="#c8d8f5" /><path d="m14 10.500-3 4 3 4M16 10.500l3 4-3 4" stroke="#1d5fd0" strokeWidth="1.300" />
        </svg>
      </div>
      <div className="absolute right-0 top-[850px] flex h-10 w-[45px] items-center rounded-l-[18px] bg-[#151515] pl-[10px] shadow-[0_0_6px_rgba(0,0,0,0.4)]">
        <svg width="30" height="30" viewBox="0 0 30 30" fill="none" stroke="#0aa67c" strokeWidth="2.200" strokeLinecap="round">
          {[0, 60, 120, 180, 240, 300].map((a) => (
            <path key={a} transform={`rotate(${a} 15 15)`} d="M10.500 10.500C10.500 4.500 12.500 1.200 15 1.200c2.800 0 5 4 5 9.300" />
          ))}
          {[0, 60, 120, 180, 240, 300].map((a) => (
            <path key={a} transform={`rotate(${a} 15 15)`} d="M20 10.500q.3 2.500 0 5" strokeWidth="1.800" />
          ))}
          <circle cx="15" cy="15" r="1.800" fill="#0aa67c" />
        </svg>
      </div>
    </div>
  );
}

function Scrollbar() {
  return (
    <div className="flex h-[953px] w-[15px] flex-col items-center bg-[#2c2c2c] pt-[6px]">
      <svg width="9" height="6"><path d="M4.500 0 9 6H0z" fill="#9f9f9f" /></svg>
      <div className="mt-[6px] h-[704px] w-[9px] rounded-full bg-[#9f9f9f]" />
      <svg className="mb-[6px] mt-auto" width="9" height="6"><path d="M4.500 6 9 0H0z" fill="#9f9f9f" /></svg>
    </div>
  );
}

/* ---------- taskbar ---------- */

function Task({ children, width, bar, active }: { children: React.ReactNode; width: string; bar?: boolean; active?: boolean }) {
  return (
    <div className={`relative flex h-10 items-center justify-center ${width} ${active ? "bg-[#4c4849]" : ""}`}>
      {children}
      {bar && <div className={`absolute bottom-0 h-0.5 bg-[#76b9ed] ${active ? "w-full" : "w-10"}`} />}
    </div>
  );
}

function Taskbar() {
  return (
    <div className="flex h-10 items-center bg-[linear-gradient(90deg,#211e1f_0%,#2a1f20_22%,#222230_29%,#1a2a3a_38%,#1d2a38_55%,#261f24_72%,#33231c_82%,#30211b_100%)] font-['Open_Sans','Noto_Sans',sans-serif] text-white">
      <div className="flex w-12 justify-center"><FaWindows size={17} /></div>
      <div className="flex h-10 w-[288px] items-center border border-[#5b5b5b] bg-[#323232] pl-[11px] text-[#c8c8c8]">
        <svg width="17" height="17" viewBox="0 0 17 17" fill="none" stroke="#fff" strokeWidth="1.400"><circle cx="10.500" cy="6.500" r="5.400" /><path d="M6.700 10.300.8 16.200" /></svg>
        <span className="ml-[11px] mt-px text-[14.500px] tracking-[-0.550px]">Pesquisar</span>
        <svg className="ml-auto mr-[15px]" width="50" height="38" viewBox="0 0 50 38">
          <path d="M10 13 1 7l7 1-3-7 5 5 1-6 2 6 5-5-3 7 6-1-8 6z" fill="#2f9e4a" />
          <ellipse cx="11" cy="24" rx="9" ry="12.500" fill="#e8b32c" />
          <path d="m4 17 13 15M3 23l10 12M8 13l11 12M18 17 5 32M19 24 9 36M14 13 3 26" stroke="#b3781a" fill="none" />
          <ellipse cx="40" cy="30" rx="9.500" ry="7" fill="#d9962a" /><ellipse cx="40" cy="28" rx="9" ry="5.500" fill="#f7cf52" /><circle cx="40" cy="28" r="1.600" fill="#c98a1e" />
          <ellipse cx="27" cy="31" rx="10" ry="7" fill="#d9962a" /><ellipse cx="27" cy="29" rx="9.500" ry="6" fill="#fadb66" /><circle cx="27" cy="29" r="2" fill="#c98a1e" />
        </svg>
      </div>
      <div className="w-[3px]" />
      <Task width="w-[48px]" bar active>
        <svg width="24" height="24" viewBox="0 0 24 24">
          <circle cx="12" cy="12" r="12" fill="#e33b2e" />
          <path d="M12 6.500H22.700A12 12 0 0 1 12 24l5-9z" fill="#fcc934" /><path d="M17 15 12 24A12 12 0 0 1 1.600 6l5.200 9z" fill="#1e9d4d" />
          <circle cx="12" cy="12" r="5.600" fill="#fff" /><circle cx="12" cy="12" r="4.300" fill="#2f7de9" />
        </svg>
      </Task>
      <Task width="w-[49px]" bar>
        <div className="relative flex size-6 items-center justify-center rounded-full bg-[#5865f2]">
          <FaDiscord size={15} />
          <div className="absolute -right-[2px] bottom-0 flex size-[14px] items-center justify-center rounded-full bg-[#e8424a]"><div className="size-[5px] rounded-full bg-white" /></div>
        </div>
      </Task>
      <Task width="w-[50px]">
        <svg width="25" height="24" viewBox="0 0 25 24">
          <ellipse cx="11" cy="13" rx="11" ry="6" fill="#a3a5aa" transform="rotate(-15 11 13)" /><ellipse cx="14" cy="8" rx="9.500" ry="5.500" fill="#f4f4f5" stroke="#d8332f" strokeWidth="2" transform="rotate(-22 14 8)" />
          <path d="m15 10 1 8M20 10l-5 7" stroke="#dfe6ee" strokeWidth="1.500" /><circle cx="14" cy="20" r="2.500" fill="none" stroke="#1979ca" strokeWidth="1.800" /><circle cx="20.500" cy="17" r="2.500" fill="none" stroke="#1979ca" strokeWidth="1.800" />
        </svg>
      </Task>
      <Task width="w-[48px]">
        <div className="relative"><FaWhatsapp size={27} color="#22d366" /><div className="absolute -bottom-[3px] -right-[8px] flex size-[17px] items-center justify-center rounded-full border border-[#8a8a8a] bg-[#2b2d30] text-[12px] font-semibold">1</div></div>
      </Task>
      <Task width="w-[48px]"><FaSteam size={23} color="#dfeaf7" className="rounded-full bg-[#123a72]" /></Task>
      <Task width="w-[50px]" bar>
        <svg width="22" height="19" viewBox="0 0 22 19"><path d="M0 1.500Q0 0 1.500 0H8l2 2.500h10.500Q22 2.500 22 4v13H0z" fill="#e0a52c" /><path d="M0 5h22v13H0z" fill="#fcd462" /><path d="M4 18v-6q0-2 2-2h10q2 0 2 2v6h-3.500v-4h-7v4z" fill="#2f8fdb" /></svg>
      </Task>
      <Task width="w-[48px]" bar>
        <svg width="23" height="19" viewBox="0 0 23 19"><rect width="23" height="19" fill="#080808" stroke="#8b8f94" /><path d="M.5.500h22v3H.5z" fill="#e8e8e8" /><path d="M6 6H4v3h2M8 6v.8M8 8.200V9M10 6l2 3M14 9h4" stroke="#fff" fill="none" /></svg>
      </Task>
      <Task width="w-[51px]" bar><VscVscode size={25} color="#2aa1ea" /></Task>
      <div className="ml-auto flex h-10 items-center">
        <div className="relative mr-[10px] size-5 rounded-full bg-linear-to-b from-[#fbbf3a] to-[#f2760e]">
          <div className="absolute -right-[2px] -top-[2px] flex size-3 items-center justify-center rounded-full bg-[#c42b1c] text-[8px]">1</div>
        </div>
        <span className="w-[38px] text-[13.500px] tracking-[-0.300px]">28°C</span>
        <span className="w-[91px] text-[13.500px] tracking-[-0.200px]">Ensolarado</span>
        <ChevronUp size={18} strokeWidth={1.800} />
        <svg className="ml-[8px]" width="13" height="16" viewBox="0 0 13 16" fill="none" stroke="#fff" strokeWidth="1.200"><rect x="1" y="4.500" width="8" height="7" rx="1.500" /><path d="m9 7 3-2v6L9 9M2.500 2Q5.500 0 8.500 2M2.500 14q3 2 6 0" /></svg>
        <svg className="ml-[9px]" width="17" height="14" viewBox="0 0 17 14" fill="none" stroke="#fff"><path d="M5 2h11.500v8H5zM8 13.500h6M11 10v3.500M.5.500h5v4h-5zM3 4.500v8" /></svg>
        <Volume2 className="ml-[6px]" size={18} strokeWidth={1.500} />
        <div className="ml-[5px] w-[66px] -translate-y-px text-center text-[11.500px] leading-[17px] tracking-[-0.350px]">15:52<br />27/06/2025</div>
        <div className="relative ml-[14px] mr-[20px]">
          <svg width="17" height="16" viewBox="0 0 17 16"><path d="M0 0h17v12H9l-4 4v-4H0z" fill="#fff" /><path d="M3 3.500h11M3 6h11M3 8.500h7" stroke="#30211b" /></svg>
          <div className="absolute -bottom-[7px] -right-[8px] flex size-[17px] items-center justify-center rounded-full border border-[#8a8a8a] bg-[#2b2d30] text-[12px] font-semibold">1</div>
        </div>
        <div className="mr-[4px] h-10 w-px bg-[#6d625d]" />
      </div>
    </div>
  );
}

export default function App() {
  return (
    <div className="h-[1080px] w-[1920px] overflow-hidden bg-[#182030] font-['Roboto',sans-serif]">
      <TabStrip />
      <Toolbar />
      <div className="flex"><Page /><Scrollbar /></div>
      <Taskbar />
    </div>
  );
}
